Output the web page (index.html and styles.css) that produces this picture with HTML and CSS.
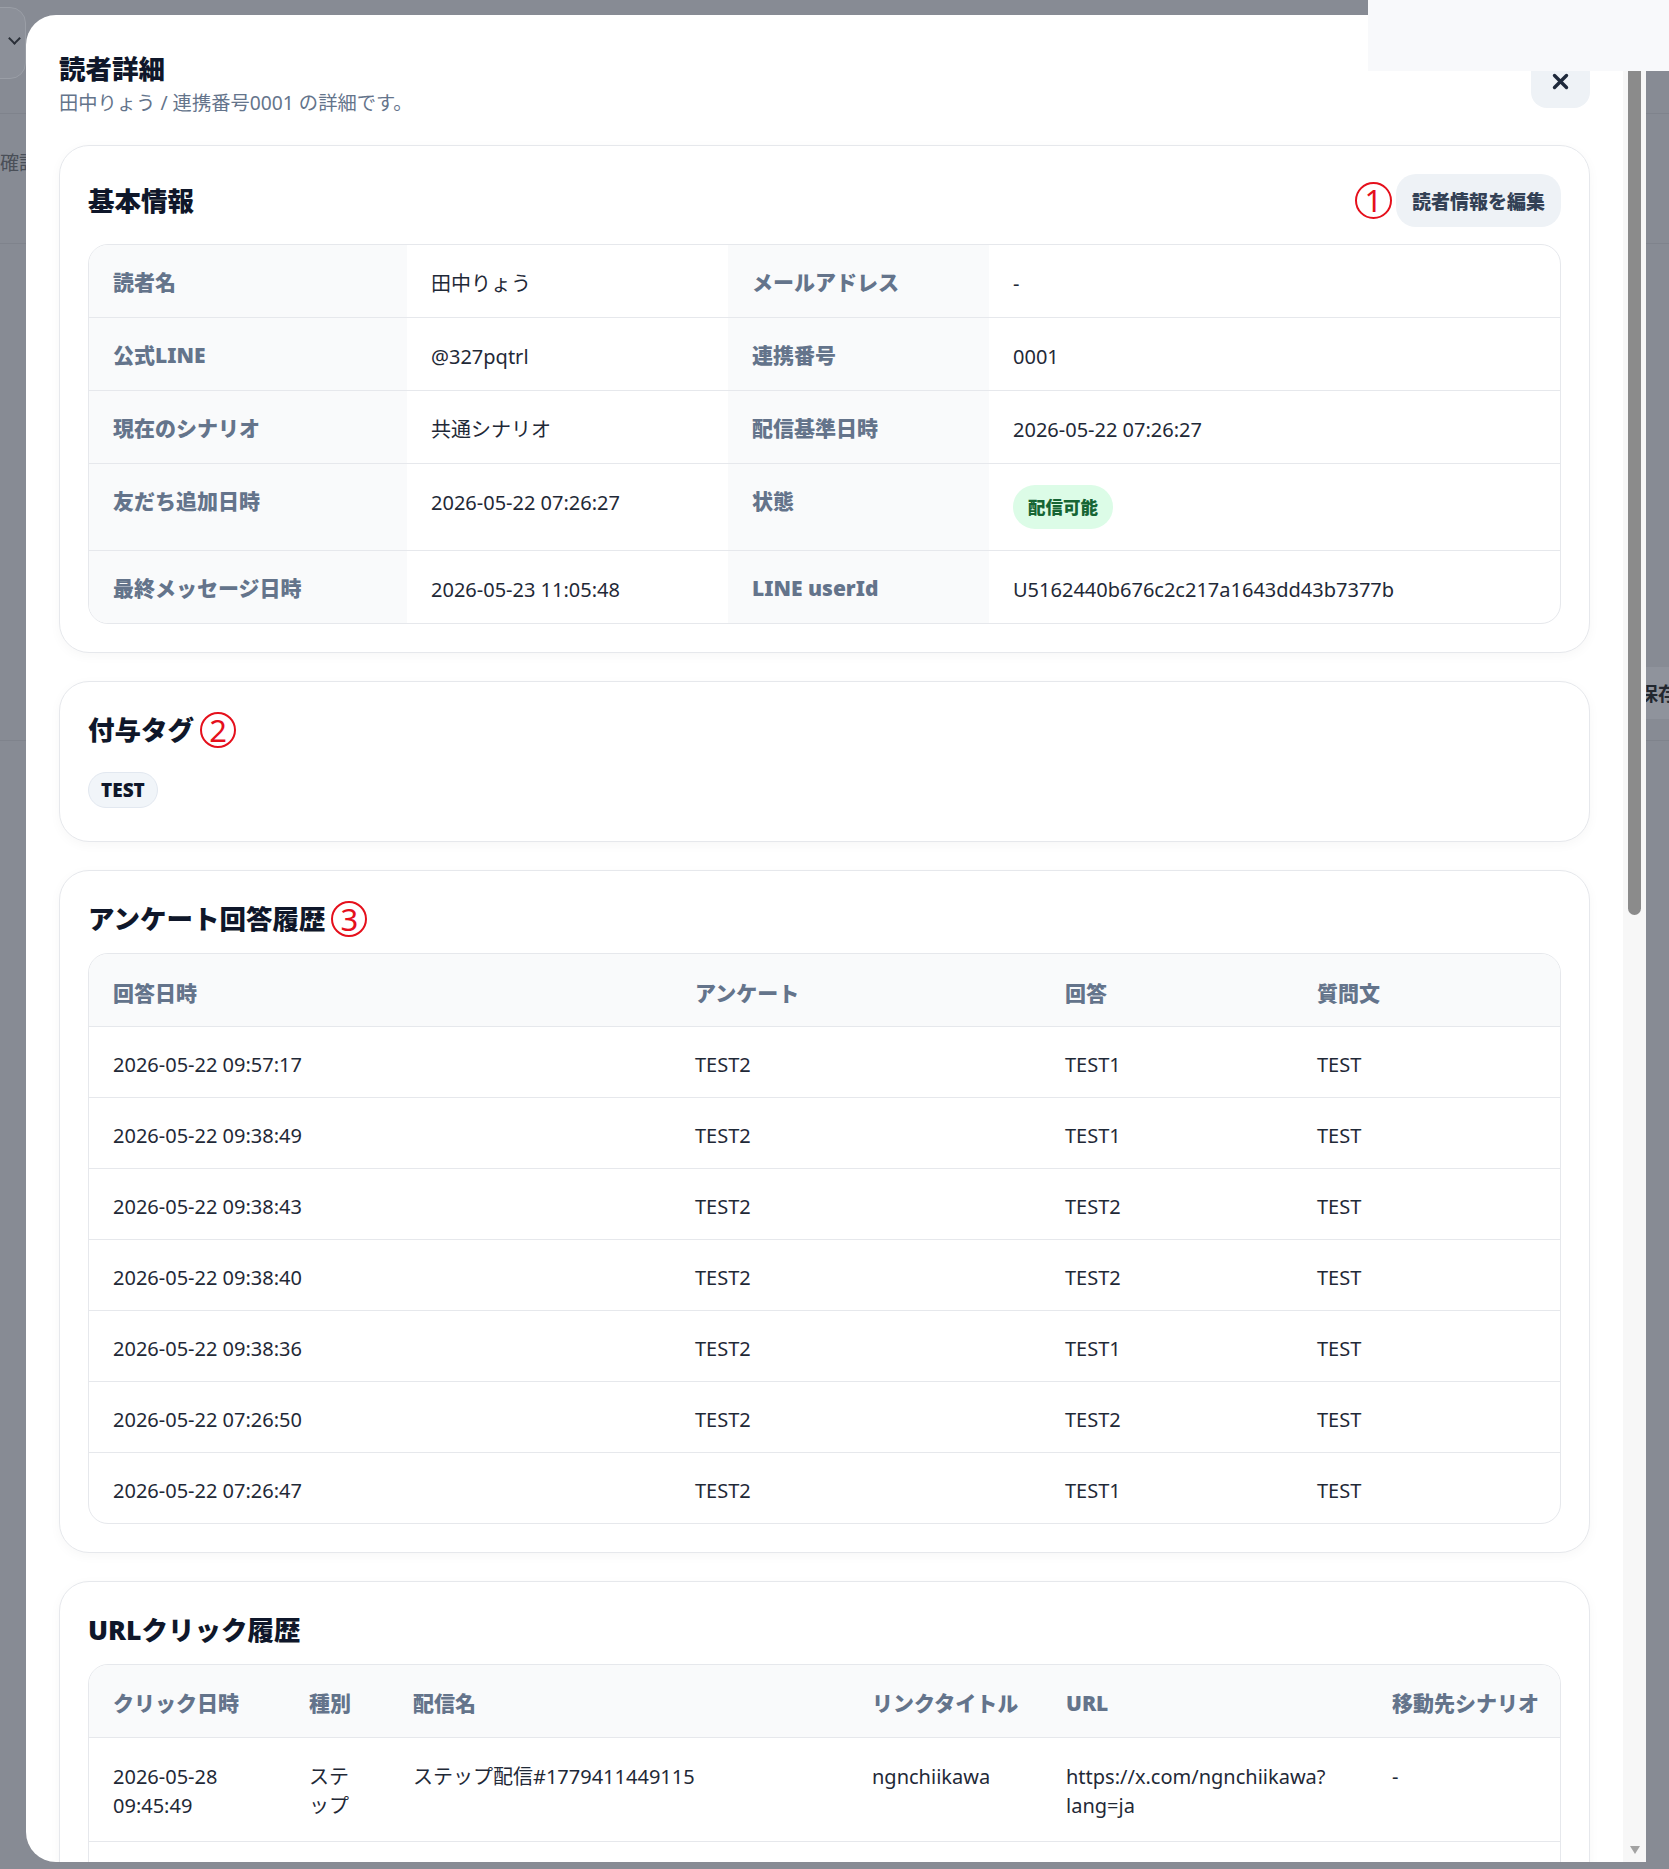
FILE: index.html
```html
<!DOCTYPE html>
<html lang="ja">
<head>
<meta charset="utf-8">
<title>読者詳細</title>
<link rel="stylesheet" href="styles.css">
</head>
<body>
<div class="under">
  <div class="under-select"><span class="under-chev"></span></div>
  <div class="under-line l1"></div>
  <div class="under-text t1">確認</div>
  <div class="under-line l2"></div>
  <div class="under-line l3"></div>
  <div class="under-band b1"><span>保存</span></div>
</div>

<div class="modal">
  <div class="modal-body">
    <div class="modal-head">
      <div>
        <h1 class="title">読者詳細</h1>
        <p class="subtitle">田中りょう / 連携番号0001 の詳細です。</p>
      </div>
      <button class="close" type="button" aria-label="閉じる">
        <svg width="17" height="17" viewBox="0 0 17 17"><path d="M2.5 2.5L14.5 14.5M14.5 2.5L2.5 14.5" stroke="#1e293b" stroke-width="3.4" stroke-linecap="round"/></svg>
      </button>
    </div>

    <section class="card">
      <div class="card-head has-action">
        <h2 class="card-title">基本情報</h2>
        <div class="head-actions">
          <span class="mark">1</span>
          <button class="edit" type="button">読者情報を編集</button>
        </div>
      </div>
      <table class="info">
        <colgroup><col class="ic1"><col class="ic2"><col class="ic3"><col></colgroup>
        <tr><td class="lbl">読者名</td><td>田中りょう</td><td class="lbl">メールアドレス</td><td>-</td></tr>
        <tr><td class="lbl">公式LINE</td><td>@327pqtrl</td><td class="lbl">連携番号</td><td>0001</td></tr>
        <tr><td class="lbl">現在のシナリオ</td><td>共通シナリオ</td><td class="lbl">配信基準日時</td><td>2026-05-22 07:26:27</td></tr>
        <tr><td class="lbl">友だち追加日時</td><td>2026-05-22 07:26:27</td><td class="lbl">状態</td><td><span class="badge">配信可能</span></td></tr>
        <tr><td class="lbl">最終メッセージ日時</td><td>2026-05-23 11:05:48</td><td class="lbl">LINE userId</td><td>U5162440b676c2c217a1643dd43b7377b</td></tr>
      </table>
    </section>

    <section class="card">
      <div class="card-head tight">
        <h2 class="card-title">付与タグ<span class="mark after">2</span></h2>
      </div>
      <div class="tags"><span class="chip">TEST</span></div>
    </section>

    <section class="card">
      <div class="card-head">
        <h2 class="card-title">アンケート回答履歴<span class="mark after">3</span></h2>
      </div>
      <table class="dt">
        <colgroup><col class="ac1"><col class="ac2"><col class="ac3"><col></colgroup>
        <thead><tr><th>回答日時</th><th>アンケート</th><th>回答</th><th>質問文</th></tr></thead>
        <tbody>
          <tr><td>2026-05-22 09:57:17</td><td>TEST2</td><td>TEST1</td><td>TEST</td></tr>
          <tr><td>2026-05-22 09:38:49</td><td>TEST2</td><td>TEST1</td><td>TEST</td></tr>
          <tr><td>2026-05-22 09:38:43</td><td>TEST2</td><td>TEST2</td><td>TEST</td></tr>
          <tr><td>2026-05-22 09:38:40</td><td>TEST2</td><td>TEST2</td><td>TEST</td></tr>
          <tr><td>2026-05-22 09:38:36</td><td>TEST2</td><td>TEST1</td><td>TEST</td></tr>
          <tr><td>2026-05-22 07:26:50</td><td>TEST2</td><td>TEST2</td><td>TEST</td></tr>
          <tr><td>2026-05-22 07:26:47</td><td>TEST2</td><td>TEST1</td><td>TEST</td></tr>
        </tbody>
      </table>
    </section>

    <section class="card">
      <div class="card-head">
        <h2 class="card-title">URLクリック履歴</h2>
      </div>
      <table class="dt urls">
        <colgroup><col class="uc1"><col class="uc2"><col class="uc3"><col class="uc4"><col class="uc5"><col></colgroup>
        <thead><tr><th>クリック日時</th><th>種別</th><th>配信名</th><th>リンクタイトル</th><th>URL</th><th>移動先シナリオ</th></tr></thead>
        <tbody>
          <tr><td>2026-05-28 09:45:49</td><td>ステップ</td><td>ステップ配信#1779411449115</td><td>ngnchiikawa</td><td>https://x.com/ngnchiikawa?<wbr>lang=ja</td><td>-</td></tr>
          <tr class="more"><td colspan="6"></td></tr>
        </tbody>
      </table>
    </section>
  </div>
  <div class="scrollbar">
    <div class="thumb"></div>
    <div class="arrow-down"></div>
  </div>
</div>

<div class="toast-area"></div>
</body>
</html>
```

FILE: styles.css
```css
* { box-sizing: border-box; }
html, body { margin: 0; padding: 0; }
body {
  width: 1669px;
  height: 1869px;
  overflow: hidden;
  position: relative;
  background: #878b94;
  font-family: "Noto Sans", "Noto Sans CJK JP", sans-serif;
  color: #1f2937;
}

/* faint page under the dim overlay */
.under { position: absolute; inset: 0; }
.under-select {
  position: absolute; left: -230px; top: 7px; width: 256px; height: 72px;
  border: 1px solid #9a9ea6; border-radius: 16px; background: #8c9099;
}
.under-chev {
  position: absolute; right: 6px; top: 26px; width: 9px; height: 9px;
  border-right: 2px solid #2a2f38; border-bottom: 2px solid #2a2f38;
  transform: rotate(45deg);
}
.under-line { position: absolute; left: 0; right: 0; height: 1px; background: #7f838c; }
.under-line.l1 { top: 113px; }
.under-line.l2 { top: 243px; }
.under-line.l3 { top: 740px; }
.under-text { position: absolute; font-size: 19px; color: #4a4f58; }
.under-text.t1 { left: 0; top: 148px; }
.under-band {
  position: absolute; right: 0; top: 667px; width: 30px; height: 52px;
  background: #8f939c; overflow: hidden;
}
.under-band span {
  position: absolute; left: 0; top: 12px; font-size: 19px; font-weight: 700; color: #22272f; white-space: nowrap;
}

/* modal */
.modal {
  position: absolute; left: 26px; top: 15px; width: 1620px; height: 1847px;
  background: #fff; border-radius: 30px 30px 0 30px;
  display: flex; overflow: hidden;
}
.modal-body { flex: 1; padding: 36px 33px 0 33px; overflow: hidden; }
.scrollbar {
  width: 23px; background: #f7f7f7; display: flex; flex-direction: column; align-items: center;
}
.thumb { margin-top: 24px; width: 13px; height: 876px; border-radius: 7px; background: #8b8b8b; }
.arrow-down {
  margin-top: auto; margin-bottom: 8px;
  width: 0; height: 0;
  border-left: 5px solid transparent; border-right: 5px solid transparent; border-top: 8px solid #a3a3a3;
}

.modal-head { display: flex; justify-content: space-between; align-items: flex-start; }
.title { margin: 0; font-size: 26.5px; line-height: 36px; font-weight: 900; color: #0f172a; }
.subtitle { margin: 2px 0 0; font-size: 19.3px; line-height: 28px; color: #64748b; }
.close {
  width: 59px; height: 54px; margin-top: 3px; padding: 0; border: 0; border-radius: 16px;
  background: #eef2f6; display: flex; align-items: center; justify-content: center;
}

.card {
  margin-top: 28px; padding: 28px; background: #fff;
  border: 1px solid #e6e8ec; border-radius: 30px;
  box-shadow: 0 3px 12px rgba(15, 23, 42, 0.035);
}
.card-head {
  display: flex; align-items: center; justify-content: space-between;
  min-height: 40px; margin-bottom: 14px;
}
.card-head.has-action { margin-bottom: 17px; }
.card-head.tight { margin-bottom: 0; }
.card-title {
  margin: 0; font-size: 26.5px; line-height: 40px; font-weight: 900; color: #0f172a;
  display: flex; align-items: center;
}
.head-actions { display: flex; align-items: center; gap: 4px; }

.mark {
  display: inline-flex; align-items: center; justify-content: center;
  width: 37px; height: 37px; border: 2.5px solid #e5101c; border-radius: 50%;
  color: #e5101c; font-size: 31px; font-weight: 400; line-height: 1;
  font-family: "Noto Sans", sans-serif;
}
.mark.after { margin-left: 6px; width: 36px; height: 36px; }

.edit {
  height: 53px; padding: 0 16px; border: 0; border-radius: 20px;
  background: #eef2f6; color: #334155; font-family: inherit; font-size: 19px; font-weight: 900;
}

/* info table */
.info, .dt {
  width: 100%; table-layout: fixed;
  border-collapse: separate; border-spacing: 0;
  border: 1px solid #e6e8ec; border-radius: 20px; overflow: hidden;
}
.ic1 { width: 318px; }
.ic2 { width: 321px; }
.ic3 { width: 261px; }
.info td {
  padding: 24px 24px 18px; font-size: 20px; line-height: 30px; vertical-align: top;
  border-top: 1px solid #e6e8ec; color: #1f2937;
}
.info tr:first-child td { border-top: 0; }
.info td.lbl {
  padding: 22px 24px 20px;
  background: #f9fafb; color: #64748b; font-weight: 900; font-size: 21px;
}
.badge {
  display: inline-flex; vertical-align: top; align-items: center;
  height: 44px; margin: -3px 0 3px; padding: 0 15px; border-radius: 999px;
  background: #dcfce7; color: #166534; font-size: 17.5px; font-weight: 900;
}

/* tags */
.tags { padding: 22px 0 5px; }
.chip {
  display: inline-flex; align-items: center; height: 36px; padding: 0 12px;
  border: 1px solid #e2e8f0; border-radius: 999px; background: #f1f5f9;
  color: #0f172a; font-size: 19px; font-weight: 900;
}

/* data tables */
.ac1 { width: 582px; }
.ac2 { width: 370px; }
.ac3 { width: 252px; }
.uc1 { width: 196px; }
.uc2 { width: 104px; }
.uc3 { width: 459px; }
.uc4 { width: 194px; }
.uc5 { width: 326px; }
.dt th {
  padding: 24px 24px 18px; text-align: left; font-size: 21px; line-height: 30px; font-weight: 900;
  color: #64748b; background: #f9fafb; border-bottom: 1px solid #e6e8ec; white-space: nowrap;
}
.urls th { padding: 23px 24px 19px; }
.dt td {
  padding: 23px 24px 17px; font-size: 20px; line-height: 30px; vertical-align: top;
  color: #1f2937; border-top: 1px solid #e6e8ec;
}
.dt tbody tr:first-child td { border-top: 0; }
.urls td { padding: 24px 24px 21px; line-height: 29px; }
.dt tr.more td { height: 70px; }

.toast-area {
  position: absolute; top: 0; right: 0; width: 301px; height: 71px; background: #f8f9fb;
}
```
